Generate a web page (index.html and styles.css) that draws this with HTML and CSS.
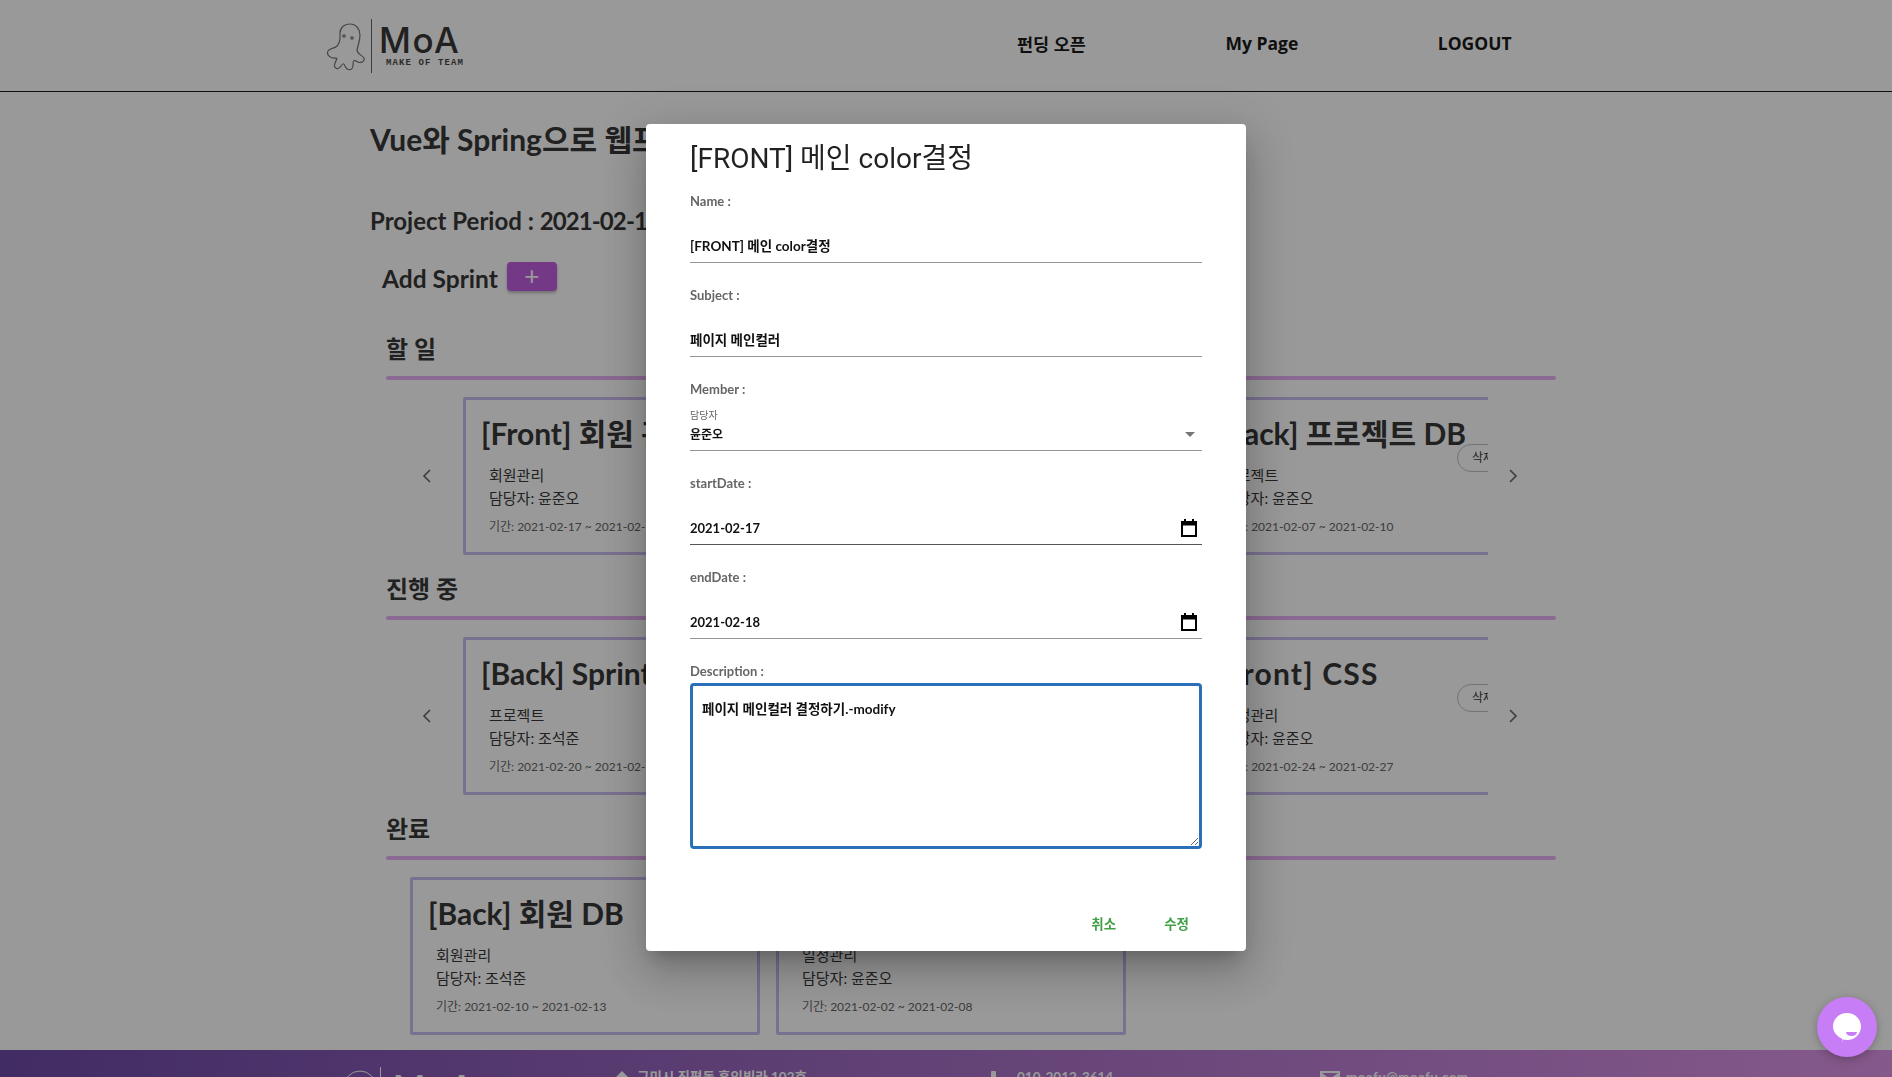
FILE: index.html
```html
<!DOCTYPE html>
<html lang="ko">
<head>
    <meta charset="UTF-8">
    <meta name="viewport" content="width=device-width, initial-scale=1.0">
    <title>MoA</title>
    <link rel="stylesheet" href="styles.css">
</head>
<body>
    <header class="topbar">
        <a class="logo" href="#">
            <svg class="logo-ghost" width="50" height="70" viewBox="0 0 50 70" fill="none" stroke="#666" stroke-width="1.2">
                <path d="M20 22C20 16 25 13 30 13C36 13 40 18 40 24C40 30 38 34 37 39C37 43 42 44 44 47C45 51 40 53 36 50C33 48 33 52 33 55C32 60 27 60 25 55C24 52 23 52 21 55C18 60 13 57 15 52C16 49 18 47 16 47C11 48 6 44 8 40C10 37 14 38 17 35C21 31 20 27 20 22Z"/>
                <circle cx="24" cy="25" r="1.2"/>
                <circle cx="32" cy="27" r="1.2"/>
            </svg>
            <span class="logo-line"></span>
            <span class="logo-text">
                <span class="logo-name">MoA</span>
                <span class="logo-sub">MAKE OF TEAM</span>
            </span>
        </a>
        <nav class="nav">
            <a href="#">펀딩 오픈</a>
            <a href="#">My Page</a>
            <a href="#">LOGOUT</a>
        </nav>
    </header>

    <main class="project">
        <h1 class="project-title">Vue와 Spring으로 웹프로젝트 만들기</h1>
        <p class="project-period">Project Period : <span class="period-dates">2021-02-14 ~ 2021-03-05</span></p>
        <div class="add-sprint">
            <span class="add-label">Add Sprint</span>
            <button class="add-btn" type="button">+</button>
        </div>

        <section class="board">
            <h2>할 일</h2>
            <div class="rule"></div>
            <div class="slider">
                <span class="arrow arrow-left"><svg width="12" height="16" viewBox="0 0 12 16" fill="none" stroke="currentColor" stroke-width="1.6"><path d="M9 2L3 8L9 14"/></svg></span>
                <div class="slider-view">
                    <article class="card">
                        <h3>[Front] 회원 관리</h3>
                        <p class="card-sub">회원관리</p>
                        <p class="card-sub">담당자: 윤준오</p>
                        <p class="card-date">기간: 2021-02-17 ~ 2021-02-18</p>
                    </article>
                    <article class="card">
                        <h3>[FRONT] 메인 color</h3>
                        <p class="card-sub">페이지 메인컬러</p>
                        <p class="card-sub">담당자: 윤준오</p>
                        <p class="card-date">기간: 2021-02-17 ~ 2021-02-18</p>
                    </article>
                    <article class="card">
                        <h3>[Back] 프로젝트 DB</h3>
                        <p class="card-sub">프로젝트</p>
                        <p class="card-sub">담당자: 윤준오</p>
                        <p class="card-date">기간: 2021-02-07 ~ 2021-02-10</p>
                        <span class="pill">삭제</span>
                    </article>
                </div>
                <span class="arrow arrow-right"><svg width="12" height="16" viewBox="0 0 12 16" fill="none" stroke="currentColor" stroke-width="1.6"><path d="M3 2L9 8L3 14"/></svg></span>
            </div>
        </section>

        <section class="board">
            <h2>진행 중</h2>
            <div class="rule"></div>
            <div class="slider">
                <span class="arrow arrow-left"><svg width="12" height="16" viewBox="0 0 12 16" fill="none" stroke="currentColor" stroke-width="1.6"><path d="M9 2L3 8L9 14"/></svg></span>
                <div class="slider-view">
                    <article class="card">
                        <h3>[Back] Sprint 관리</h3>
                        <p class="card-sub">프로젝트</p>
                        <p class="card-sub">담당자: 조석준</p>
                        <p class="card-date">기간: 2021-02-20 ~ 2021-02-25</p>
                    </article>
                    <article class="card">
                        <h3>[Back] 일정 API</h3>
                        <p class="card-sub">일정관리</p>
                        <p class="card-sub">담당자: 조석준</p>
                        <p class="card-date">기간: 2021-02-20 ~ 2021-02-25</p>
                    </article>
                    <article class="card">
                        <h3 class="title-wide">[Front] CSS</h3>
                        <p class="card-sub">일정관리</p>
                        <p class="card-sub">담당자: 윤준오</p>
                        <p class="card-date">기간: 2021-02-24 ~ 2021-02-27</p>
                        <span class="pill">삭제</span>
                    </article>
                </div>
                <span class="arrow arrow-right"><svg width="12" height="16" viewBox="0 0 12 16" fill="none" stroke="currentColor" stroke-width="1.6"><path d="M3 2L9 8L3 14"/></svg></span>
            </div>
        </section>

        <section class="board">
            <h2>완료</h2>
            <div class="rule"></div>
            <div class="slider slider-plain">
                <article class="card">
                    <h3>[Back] 회원 DB</h3>
                    <p class="card-sub">회원관리</p>
                    <p class="card-sub">담당자: 조석준</p>
                    <p class="card-date">기간: 2021-02-10 ~ 2021-02-13</p>
                </article>
                <article class="card">
                    <h3>[Back] 일정 DB</h3>
                    <p class="card-sub">일정관리</p>
                    <p class="card-sub">담당자: 윤준오</p>
                    <p class="card-date">기간: 2021-02-02 ~ 2021-02-08</p>
                </article>
            </div>
        </section>
    </main>

    <footer class="footer">
        <div class="footer-logo">
            <svg width="40" height="40" viewBox="0 0 40 40" fill="none" stroke="#fff" stroke-width="1"><circle cx="20" cy="20" r="16"/></svg>
            <span class="footer-line"></span>
            <span class="footer-name">MoA</span>
        </div>
        <div class="footer-item footer-addr">
            <svg width="18" height="16" viewBox="0 0 18 16" fill="#fff"><path d="M9 0L18 9H15V16H3V9H0Z"/></svg>
            <span>구미시 진평동 홍익빌라 102호</span>
        </div>
        <div class="footer-item footer-phone">
            <svg width="14" height="16" viewBox="0 0 14 16" fill="#fff"><rect x="4" y="0" width="5" height="16" rx="1"/></svg>
            <span>010-2012-3614</span>
        </div>
        <div class="footer-item footer-mail">
            <svg width="20" height="16" viewBox="0 0 20 16" fill="#fff"><path d="M0 0H20V16H0ZM2 2L10 8L18 2Z"/></svg>
            <span>moafu@moafu.com</span>
        </div>
    </footer>

    <div class="overlay">
        <div class="dialog">
            <div class="dialog-title">[FRONT] 메인 color결정</div>

            <div class="field">
                <label>Name :</label>
                <div class="value">[FRONT] 메인 color결정</div>
            </div>
            <div class="field">
                <label>Subject :</label>
                <div class="value">페이지 메인컬러</div>
            </div>
            <div class="field">
                <label>Member :</label>
                <div class="value value-select">
                    <span class="select-text">
                        <small>담당자</small>
                        <span>윤준오</span>
                    </span>
                    <span class="caret"></span>
                </div>
            </div>
            <div class="field">
                <label>startDate :</label>
                <div class="value value-date value-hover">
                    <span>2021-02-17</span>
                    <svg class="cal" width="18" height="20" viewBox="0 0 18 20" fill="none" stroke="#000" stroke-width="2"><path d="M2 4H16V18H2Z"/><path d="M1 6H17" stroke-width="3"/><path d="M5 1V4M13 1V4"/></svg>
                </div>
            </div>
            <div class="field">
                <label>endDate :</label>
                <div class="value value-date">
                    <span>2021-02-18</span>
                    <svg class="cal" width="18" height="20" viewBox="0 0 18 20" fill="none" stroke="#000" stroke-width="2"><path d="M2 4H16V18H2Z"/><path d="M1 6H17" stroke-width="3"/><path d="M5 1V4M13 1V4"/></svg>
                </div>
            </div>
            <div class="field field-area">
                <label>Description :</label>
                <textarea class="desc">페이지 메인컬러 결정하기.-modify</textarea>
            </div>

            <div class="dialog-actions">
                <button type="button">취소</button>
                <button type="button">수정</button>
            </div>
        </div>
    </div>

    <div class="chat">
        <svg width="60" height="60" viewBox="0 0 60 60">
            <path fill="#fff" d="M30 16C38 16 44 22 44 29.5C44 37 38 43 30 43C28.500 43 27 42.800 25.500 42.300L25 46V41.500C20 39.500 16 35 16 29.500C16 22 22 16 30 16Z"/>
            <path fill="#c77df5" d="M29 35H40C39.500 38 37 39 34.500 39C32 39 29.500 38 29 35Z"/>
        </svg>
    </div>
</body>
</html>
```

FILE: styles.css
```css
html, body {
    margin: 0;
    padding: 0;
    height: 100%;
    overflow: hidden;
}
body {
    font-family: "Lato", "Noto Sans CJK KR", sans-serif;
    color: #222;
    background: #fff;
}
a {
    color: inherit;
    text-decoration: none;
}
h1, h2, h3, p {
    margin: 0;
}

/* top bar */
.topbar {
    display: flex;
    align-items: center;
    height: 91px;
    border-bottom: 1px solid #000;
    padding-left: 320px;
}
.logo {
    display: flex;
    align-items: center;
    width: 145px;
    height: 70px;
}
.logo-ghost {
    flex: none;
}
.logo-line {
    width: 1px;
    height: 54px;
    background: #555;
    margin-left: 1px;
}
.logo-text {
    display: flex;
    flex-direction: column;
    margin-left: 7px;
}
.logo-name {
    font-family: "Inter", sans-serif;
    font-size: 35px;
    line-height: 32px;
    letter-spacing: 1.6px;
    font-weight: 500;
    color: #222;
}
.logo-sub {
    font-family: "Liberation Mono", monospace;
    font-size: 9px;
    line-height: 10px;
    font-weight: 700;
    letter-spacing: 1.1px;
    margin-left: 7px;
    margin-top: 2px;
    white-space: nowrap;
    color: #333;
}
.nav {
    display: flex;
    margin-left: 552px;
    padding-bottom: 4px;
    gap: 139.5px;
    font-family: "Open Sans", "Noto Sans CJK KR", sans-serif;
    font-size: 17.5px;
    font-weight: 700;
    color: #000;
}

/* project */
.project {
    padding-left: 370px;
}
.project-title {
    font-size: 30px;
    line-height: 46px;
    font-weight: 700;
    margin-top: 24px;
    white-space: nowrap;
}
.project-period {
    font-size: 24px;
    line-height: 32px;
    font-weight: 700;
    margin-top: 43px;
    white-space: nowrap;
}
.period-dates {
    letter-spacing: -0.9px;
}
.add-sprint {
    display: flex;
    align-items: center;
    height: 29px;
    margin-top: 25px;
    margin-left: 12px;
    font-size: 24.5px;
    font-weight: 700;
}
.add-label {
    padding-top: 3px;
}
.add-btn {
    width: 50px;
    height: 29px;
    margin-left: 9px;
    padding: 0;
    border: none;
    border-radius: 4px;
    background: #b94cdc;
    color: #fff;
    font-size: 26px;
    font-weight: 400;
    line-height: 27px;
    box-shadow: 0 2px 3px rgba(0, 0, 0, 0.3);
}

/* boards */
.board {
    margin-left: 16px;
    width: 1170px;
    height: 240px;
}
.board:first-of-type {
    margin-top: 43px;
}
.board h2 {
    font-size: 24px;
    line-height: 30px;
    height: 42px;
    font-weight: 700;
}
.rule {
    height: 4px;
    border-radius: 2px;
    background: #e4a8f2;
}
.slider {
    display: flex;
    align-items: center;
    margin-top: 17px;
}
.slider-plain {
    gap: 16px;
    padding-left: 24px;
}
.slider-view {
    display: flex;
    gap: 17px;
    width: 1025px;
    overflow: hidden;
}
.arrow {
    display: flex;
    flex: none;
    color: #555;
}
.arrow-left {
    width: 77px;
    padding-left: 35px;
    box-sizing: border-box;
}
.arrow-right {
    width: 50px;
    padding-left: 19px;
    box-sizing: border-box;
}
.card {
    position: relative;
    flex: none;
    box-sizing: border-box;
    width: 350px;
    height: 158px;
    padding: 11px 15px 0;
    border: 3px solid #c4b5ee;
    border-radius: 2px;
}
.card h3 {
    font-size: 30px;
    line-height: 44px;
    font-weight: 700;
    white-space: nowrap;
    margin-bottom: 9px;
}
.card .title-wide {
    letter-spacing: 1.2px;
}
.card-sub {
    font-size: 15px;
    line-height: 23px;
    padding-left: 8px;
}
.card-date {
    font-size: 12px;
    line-height: 20px;
    margin-top: 7px;
    padding-left: 8px;
    color: #555;
}
.pill {
    position: absolute;
    left: 257px;
    top: 44px;
    width: 70px;
    height: 28px;
    box-sizing: border-box;
    padding-left: 14px;
    border: 1px solid #bbb;
    border-radius: 14px;
    font-size: 12px;
    line-height: 26px;
}

/* footer */
.footer {
    display: flex;
    height: 160px;
    margin-top: -4px;
    padding-top: 17px;
    box-sizing: border-box;
    background: linear-gradient(90deg, #5e369d 0%, #da89e4 100%);
    color: #fff;
    font-size: 13.5px;
    font-weight: 700;
}
.footer-logo {
    display: flex;
    margin-left: 340px;
    width: 273px;
}
.footer-line {
    width: 1px;
    height: 50px;
    background: #fff;
}
.footer-name {
    font-size: 34px;
    line-height: 40px;
    margin-left: 12px;
    letter-spacing: 3px;
}
.footer-item {
    display: flex;
    gap: 6px;
    line-height: 20px;
}
.footer-item svg {
    margin-top: 4px;
}
.footer-addr {
    width: 374px;
}
.footer-phone {
    width: 333px;
    gap: 16px;
}
.footer-mail {
    letter-spacing: 0.4px;
}

/* modal */
.overlay {
    position: fixed;
    top: 0;
    left: 0;
    right: 0;
    bottom: 0;
    display: flex;
    justify-content: center;
    align-items: flex-start;
    background: rgba(33, 33, 33, 0.46);
}
.dialog {
    display: flex;
    flex-direction: column;
    box-sizing: border-box;
    width: 600px;
    height: 827px;
    margin-top: 124px;
    padding: 19px 44px 0;
    background: #fff;
    border-radius: 4px;
    box-shadow: 0 11px 15px -7px rgba(0, 0, 0, 0.2), 0 24px 38px 3px rgba(0, 0, 0, 0.14), 0 9px 46px 8px rgba(0, 0, 0, 0.12);
}
.dialog-title {
    font-family: "Roboto", "Noto Sans CJK KR", sans-serif;
    font-size: 28px;
    line-height: 32px;
    color: rgba(0, 0, 0, 0.87);
    margin-bottom: 16px;
}
.field {
    height: 94px;
}
.field label {
    display: block;
    font-size: 13px;
    line-height: 20px;
    font-weight: 700;
    color: #666;
}
.value {
    display: flex;
    align-items: flex-end;
    justify-content: space-between;
    box-sizing: border-box;
    height: 52px;
    padding-bottom: 6px;
    border-bottom: 1px solid #949494;
    font-size: 13.5px;
    line-height: 20px;
    font-weight: 700;
    color: #111;
}
.value-date {
    font-size: 13px;
}
.value-hover {
    border-bottom-color: #555;
}
.value-select {
    padding-bottom: 5px;
    font-size: 12px;
}
.select-text {
    display: flex;
    flex-direction: column;
}
.select-text small {
    font-size: 10px;
    line-height: 12px;
    margin-bottom: 4px;
    font-weight: 400;
    color: #666;
}
.caret {
    width: 0;
    height: 0;
    margin-right: 7px;
    margin-bottom: 8px;
    border-left: 5px solid transparent;
    border-right: 5px solid transparent;
    border-top: 5px solid #757575;
}
.cal {
    margin-right: 4px;
}
.field-area {
    height: 180px;
}
.desc {
    display: block;
    box-sizing: border-box;
    width: 512px;
    height: 166px;
    margin-top: 2px;
    padding: 13px 9px;
    border: 3px solid #2a70b9;
    border-radius: 4px;
    outline: none;
    font-family: inherit;
    font-size: 13.5px;
    line-height: 20px;
    font-weight: 700;
    color: #111;
}
.dialog-actions {
    display: flex;
    justify-content: flex-end;
    gap: 48px;
    margin-top: auto;
    padding: 0 13px 17px 0;
}
.dialog-actions button {
    padding: 0;
    border: none;
    background: none;
    font-family: inherit;
    font-size: 13.5px;
    line-height: 20px;
    font-weight: 700;
    color: #43a047;
}

/* chat launcher */
.chat {
    position: fixed;
    right: 15px;
    bottom: 20px;
    width: 60px;
    height: 60px;
    border-radius: 50%;
    background: #c77df5;
    box-shadow: 0 2px 8px rgba(0, 0, 0, 0.25);
}
.chat svg {
    display: block;
}
```
